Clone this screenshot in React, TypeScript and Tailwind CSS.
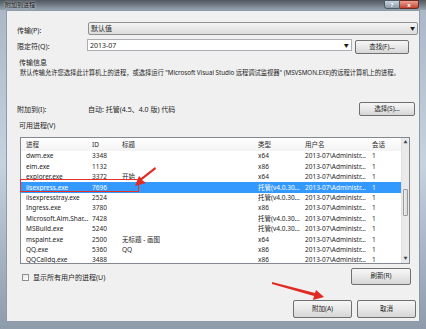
import React from "react";

const rows = [
  { name: "dwm.exe", id: "3348", title: "", type: "x64" },
  { name: "eim.exe", id: "1132", title: "", type: "x86" },
  { name: "explorer.exe", id: "3372", title: "开始", type: "x64" },
  { name: "iisexpress.exe", id: "7696", title: "", type: "托管(v4.0.30...", selected: true },
  { name: "iisexpresstray.exe", id: "2524", title: "", type: "托管(v4.0.30..." },
  { name: "Ingress.exe", id: "3780", title: "", type: "x86" },
  { name: "Microsoft.Alm.Shar...", id: "7428", title: "", type: "托管(v4.0.30..." },
  { name: "MSBuild.exe", id: "5240", title: "", type: "托管(v4.0.30..." },
  { name: "mspaint.exe", id: "2500", title: "无标题 - 画图", type: "x64" },
  { name: "QQ.exe", id: "5360", title: "QQ", type: "x86" },
  { name: "QQCalldq.exe", id: "3488", title: "", type: "x86" },
];

const btn =
  "flex items-center justify-center rounded-[2px] border border-[#707070] bg-gradient-to-b from-[#f6f6f6] via-[#e8e8e8] to-[#d6d6d6] text-[6.5px] text-[#1e1e1e]";

const cols = "grid grid-cols-[66px_30px_136px_47px_67px_1fr]";

const App = () => {
  return (
    <div className="relative w-[426px] h-[329px] overflow-hidden bg-gradient-to-b from-[#aab6c3] via-[#c6d2de] to-[#8e9baa] font-['Noto_Sans','Noto_Sans_CJK_SC',sans-serif] text-[#1e1e1e]">
      {/* title bar */}
      <div className="h-[10px] flex items-center justify-between bg-gradient-to-b from-[#4f565e] to-[#95a3b1] pl-[5px]">
        <span className="text-[6px] leading-none text-[#1a1a1a] [text-shadow:0_0_3px_#fff]">附加到进程</span>
        <div className="flex h-[9px] self-start mr-[7px]">
          <div className="w-[16px] h-full flex items-center justify-center bg-gradient-to-b from-[#c9d4df] to-[#8b99a8] border border-[#4d5a66] rounded-bl-[3px] text-[6px] leading-none text-white font-bold">?</div>
          <div className="w-[19px] h-full flex items-center justify-center bg-gradient-to-b from-[#e8a093] to-[#c4402c] border border-l-0 border-[#6b2a20] rounded-br-[3px] text-[6px] leading-none text-white font-bold">x</div>
        </div>
      </div>

      {/* dialog body */}
      <div className="mx-[6px] h-[312px] bg-[#f0f0f0] border border-[#8d9aa7] px-[10px] text-[7px] leading-none">
        <div className="flex items-center mt-[11px] h-[13px]">
          <span className="w-[71px] mt-[4px]">传输(P):</span>
          <div className="flex-1 -mr-[9px] h-[13px] flex items-center justify-between rounded-[2px] border border-[#8e8f8f] bg-gradient-to-b from-[#f4f4f4] to-[#dcdcdc] px-[2px]">
            <span>默认值</span>
            <span className="text-[5px]">▼</span>
          </div>
        </div>

        <div className="flex items-center mt-[4px] h-[14px]">
          <span className="w-[71px]">限定符(Q):</span>
          <div className="w-[269px] h-[12px] self-start flex items-center justify-between border border-[#abadb3] bg-white px-[2px]">
            <span>2013-07</span>
            <span className="text-[5px]">▼</span>
          </div>
          <div className={`${btn} ml-[3px] w-[55px] h-[14px] mt-[2px]`}>查找(F)...</div>
        </div>

        <div className="mt-[6px] ml-[2px]">传输信息</div>
        <div className="mt-[4px] ml-[3px] whitespace-nowrap text-[6.3px] tracking-[-0.05px]">
          默认传输允许您选择此计算机上的进程，或选择运行 "Microsoft Visual Studio 远程调试监视器" (MSVSMON.EXE)的远程计算机上的进程。
        </div>

        <div className="flex items-center mt-[26px] h-[14px]">
          <span className="w-[71px]">附加到(I):</span>
          <span className="flex-1">自动: 托管(4.5、4.0 版) 代码</span>
          <div className={`${btn} w-[56px] h-[14px] mr-[-6px]`}>选择(S)...</div>
        </div>

        <div className="mt-[6px] ml-[2px]">可用进程(V)</div>

        {/* process list */}
        <div className="mt-[8px] ml-[3px] w-[390px] h-[127px] overflow-hidden border border-[#828790] bg-white flex">
          <div className="flex-1 flex flex-col">
            <div className={`${cols} h-[13px] shrink-0 items-center pl-[5px] bg-gradient-to-b from-white to-[#f3f3f3] text-[#2a2a2a] text-[6.5px]`}>
              <span>进程</span>
              <span>ID</span>
              <span>标题</span>
              <span>类型</span>
              <span>用户名</span>
              <span>会话</span>
            </div>
            {rows.map((r) => (
              <div
                key={r.name}
                className={`${cols} h-[10.4px] shrink-0 items-center pl-[5px] whitespace-nowrap text-[6.5px] leading-[10px] ${
                  r.selected ? "bg-[#3399ff] text-white" : "text-[#1e1e1e]"
                }`}
              >
                <span className="overflow-hidden">{r.name}</span>
                <span>{r.id}</span>
                <span>{r.title}</span>
                <span className="overflow-hidden">{r.type}</span>
                <span className="overflow-hidden">2013-07\Administr...</span>
                <span>1</span>
              </div>
            ))}
          </div>
          {/* scrollbar */}
          <div className="w-[8px] flex flex-col bg-[#eaeaea] border-l border-[#e0e0e0]">
            <div className="h-[9px] flex items-center justify-center text-[4px] text-[#444]">▲</div>
            <div className="h-[42px]" />
            <div className="h-[27px] mx-[1px] rounded-[1px] border border-[#9a9a9a] bg-gradient-to-r from-[#f0f0f0] to-[#d8d8d8]" />
            <div className="flex-1" />
            <div className="h-[9px] flex items-center justify-center text-[4px] text-[#444]">▼</div>
          </div>
        </div>

        <div className="flex items-center justify-between mt-[3px] ml-[5px] w-[389px] h-[18px]">
          <div className="flex items-center gap-[4px] mt-[3px]">
            <div className="w-[7px] h-[7px] border border-[#8f8f8f] bg-gradient-to-br from-[#e6e6e6] to-white" />
            <span>显示所有用户的进程(U)</span>
          </div>
          <div className={`${btn} w-[60px] h-[17px]`}>刷新(R)</div>
        </div>

        <div className="flex justify-end gap-[5px] mt-[15px] -mr-[7px]">
          <div className={`${btn} w-[59px] h-[18px] border-[#3c7fb1] from-[#eaf6fd] via-[#d9f0fc] to-[#bee6fd]`}>附加(A)</div>
          <div className={`${btn} w-[59px] h-[18px]`}>取消</div>
        </div>
      </div>

      {/* annotation overlay */}
      <div className="absolute left-[20px] top-[179px] w-[119px] h-[13px] border border-[#e8302a]" />
      <svg className="absolute left-0 top-0" width="426" height="329" viewBox="0 0 426 329">
        <polygon points="155,167 156,169 142,180 146,183 135,186 139,176 141,178" fill="#e02a22" />
        <polygon points="272,282 272,284 314,296 313,300 324,297 316,290 315,293" fill="#e02a22" />
      </svg>
    </div>
  );
};

export default App;
